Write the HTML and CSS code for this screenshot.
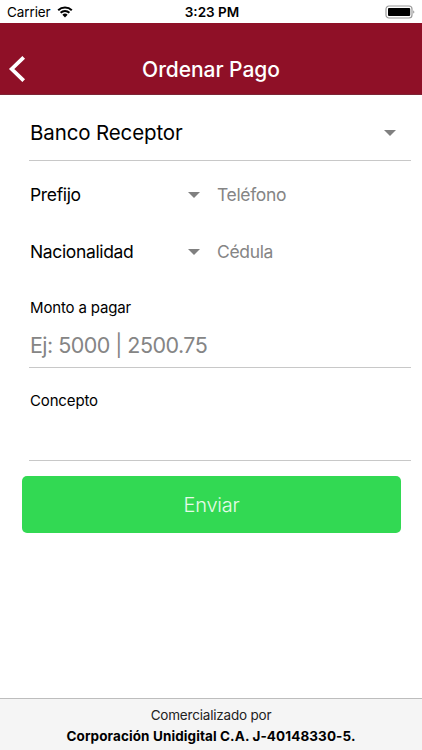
FILE: index.html
```html
<!DOCTYPE html>
<html lang="es">

	<head>
		<meta charset="utf-8" />
		<title>Ordenar Pago</title>
		<link rel="stylesheet" href="styles.css">
	</head>

	<body>
		<div id="status">
			<div class="carrier">
				<span>Carrier</span>
				<svg class="wifi" width="16" height="12" viewBox="0 0 16 12">
					<path d="M1.2 4.3a9.7 9.7 0 0 1 13.6 0M3.6 6.8a6.3 6.3 0 0 1 8.8 0" fill="none" stroke="#000" stroke-width="2" />
					<path d="M5.4 8.7a3.8 3.8 0 0 1 5.2 0L8 11.4z" />
				</svg>
			</div>
			<span class="time">3:23 PM</span>
			<svg class="battery" width="31" height="14" viewBox="0 0 31 14">
				<rect x="1" y="1" width="26" height="12" rx="3" fill="#fff" stroke="#999" stroke-width="1.2" />
				<rect x="3" y="3" width="22.2" height="8" rx="1" />
				<path d="M28.5 5.2q1.7 1.8 0 3.6z" fill="#555" />
			</svg>
		</div>
		<div id="header">
			<svg class="back" width="18" height="28" viewBox="0 0 18 28">
				<path d="M15.7 2.4L3.7 14l12 11.6" fill="none" stroke="#fff" stroke-width="3.8" />
			</svg>
			<h1>Ordenar Pago</h1>
		</div>
		<div id="content">
			<div class="select banco">
				<span class="text">Banco Receptor</span>
				<i class="arrow"></i>
			</div>
			<div class="row">
				<div class="select">
					<span class="text">Prefijo</span>
					<i class="arrow"></i>
				</div>
				<span class="placeholder">Teléfono</span>
			</div>
			<div class="row">
				<div class="select">
					<span class="text">Nacionalidad</span>
					<i class="arrow"></i>
				</div>
				<span class="placeholder">Cédula</span>
			</div>
			<div class="field monto">
				<label>Monto a pagar</label>
				<span class="placeholder">Ej: 5000 | 2500.75</span>
			</div>
			<div class="field concepto">
				<label>Concepto</label>
			</div>
			<div class="button"><span>Enviar</span></div>
		</div>
		<div id="footer">
			<p>Comercializado por</p>
			<p class="company">Corporación Unidigital C.A. J-40148330-5.</p>
		</div>
	</body>

</html>
```

FILE: styles.css
```css
* {
	margin: 0;
	padding: 0;
	box-sizing: border-box;
}

body {
	display: flex;
	flex-direction: column;
	height: 750px;
	background: #fff;
	color: #000;
	font-family: Inter, "Liberation Sans", sans-serif;
	overflow: hidden;
}

#status {
	display: grid;
	grid-template-columns: 1fr auto 1fr;
	align-items: center;
	height: 23px;
	padding: 0 6px 0 7px;
	font-size: 13.5px;
}

.carrier {
	display: flex;
	align-items: center;
	gap: 6px;
	letter-spacing: -0.1px;
}

.time {
	padding-left: 1px;
	font-size: 13.5px;
	font-weight: 600;
}

.battery {
	justify-self: end;
}

#header {
	display: grid;
	grid-template-columns: 60px 1fr 60px;
	align-items: center;
	height: 72px;
	padding-top: 21px;
	background: #8f1027;
	border-bottom: 1px solid #7d2535;
	color: #fff;
}

.back {
	margin-left: 8px;
}

h1 {
	font-size: 21px;
	font-weight: 500;
	letter-spacing: -0.05px;
	text-align: center;
}

#content {
	flex: 1;
	padding: 10px 11px 0 29px;
}

.select {
	display: flex;
	align-items: center;
	justify-content: space-between;
	padding-left: 1px;
}

.arrow {
	border: 6px solid transparent;
	border-top-color: #808080;
	border-bottom: 0;
}

.banco {
	height: 56px;
	margin-bottom: 5px;
	padding-right: 15px;
	border-bottom: 1px solid #c8c8c8;
	font-size: 20.5px;
	letter-spacing: -0.13px;
}

.row {
	display: grid;
	grid-template-columns: 171px 1fr;
	column-gap: 17px;
	align-items: center;
	height: 57px;
	font-size: 17.5px;
	letter-spacing: -0.35px;
}

.placeholder {
	color: #858585;
}

.field {
	display: flex;
	flex-direction: column;
	border-bottom: 1px solid #c8c8c8;
	padding-left: 1px;
}

label {
	font-size: 15px;
	line-height: 20px;
	letter-spacing: -0.15px;
}

.monto {
	height: 88px;
	padding-top: 18px;
}

.monto .placeholder {
	margin-top: 12px;
	font-size: 21.5px;
	line-height: 30px;
	letter-spacing: -0.55px;
}

.concepto {
	height: 93px;
	padding-top: 23px;
}

.button {
	display: flex;
	align-items: center;
	justify-content: center;
	height: 57px;
	margin: 15px 10px 0 -7px;
	border-radius: 5px;
	background: #32d953;
	color: #e6fbe9;
	font-size: 20px;
	font-weight: 300;
	letter-spacing: -0.2px;
}

#footer {
	height: 52px;
	padding-top: 6px;
	border-top: 1px solid #bdbdbd;
	background: #f5f5f5;
	font-size: 13.5px;
	line-height: 21px;
	letter-spacing: -0.2px;
	text-align: center;
	color: #222;
}

.company {
	font-weight: 700;
	letter-spacing: 0.1px;
	color: #000;
}
```
